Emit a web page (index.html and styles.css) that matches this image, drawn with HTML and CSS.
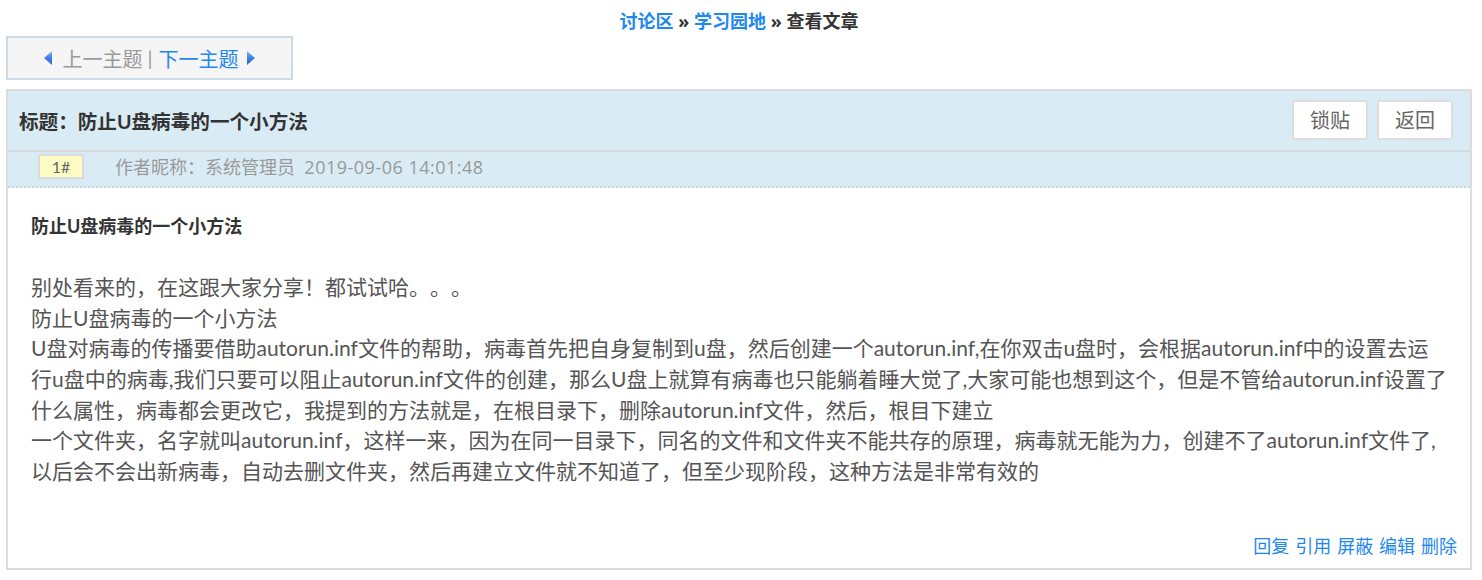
FILE: index.html
```html
<!DOCTYPE html>
<html lang="zh-CN">
<head>
<meta charset="utf-8">
<title>查看文章</title>
<link rel="stylesheet" href="styles.css">
</head>
<body>
<div class="crumbs"><a href="#">讨论区</a> » <a href="#">学习园地</a> » <span>查看文章</span></div>
<div class="topic-nav">
  <svg class="arr" width="8" height="14" viewBox="0 0 8 14"><defs><linearGradient id="ga" x1="0" y1="0" x2="0" y2="1"><stop offset="0" stop-color="#8fb5f2"/><stop offset="0.5" stop-color="#3f7fe6"/><stop offset="1" stop-color="#2c62c9"/></linearGradient></defs><polygon points="0,7 8,0 8,14" fill="url(#ga)"/></svg>
  <span class="prev">上一主题</span>
  <span class="sep">|</span>
  <a href="#" class="next">下一主题</a>
  <svg class="arr arr-r" width="8" height="14" viewBox="0 0 8 14"><defs><linearGradient id="gb" x1="0" y1="0" x2="0" y2="1"><stop offset="0" stop-color="#8fb5f2"/><stop offset="0.5" stop-color="#3f7fe6"/><stop offset="1" stop-color="#2c62c9"/></linearGradient></defs><polygon points="8,7 0,0 0,14" fill="url(#gb)"/></svg>
</div>
<div class="panel">
  <div class="panel-head">
    <div class="title">标题：防止U盘病毒的一个小方法</div>
    <div class="btns"><button class="btn">锁贴</button><button class="btn">返回</button></div>
  </div>
  <div class="author-row">
    <span class="floor">1#</span>
    <span class="author">作者昵称：系统管理员&nbsp;&nbsp;<span class="date">2019-09-06 14:01:48</span></span>
  </div>
  <div class="content">
    <div class="heading">防止U盘病毒的一个小方法</div>
    <br>
    别处看来的，在这跟大家分享！都试试哈。。。<br>
    防止U盘病毒的一个小方法<br>
    U盘对病毒的传播要借助autorun.inf文件的帮助，病毒首先把自身复制到u盘，然后创建一个autorun.inf,在你双击u盘时，会根据autorun.inf中的设置去运行u盘中的病毒,我们只要可以阻止autorun.inf文件的创建，那么U盘上就算有病毒也只能躺着睡大觉了,大家可能也想到这个，但是不管给autorun.inf设置了什么属性，病毒都会更改它，我提到的方法就是，在根目录下，删除autorun.inf文件，然后，根目下建立<br>
    一个文件夹，名字就叫autorun.inf，这样一来，因为在同一目录下，同名的文件和文件夹不能共存的原理，病毒就无能为力，创建不了autorun.inf文件了,以后会不会出新病毒，自动去删文件夹，然后再建立文件就不知道了，但至少现阶段，这种方法是非常有效的
  </div>
  <div class="actions"><a href="#">回复</a> <a href="#">引用</a> <a href="#">屏蔽</a> <a href="#">编辑</a> <a href="#">删除</a></div>
</div>
</body>
</html>
```
FILE: styles.css
```css
html, body {
  margin: 0;
  padding: 0;
  background: #fff;
}
body {
  font-family: "Lato", "Noto Sans CJK SC", sans-serif;
  color: #555;
  padding: 0 10px 0 6px;
  text-spacing-trim: space-all;
}
a {
  color: #1e88f0;
  text-decoration: none;
}
.crumbs {
  font-family: "Open Sans", "Noto Sans CJK SC", sans-serif;
  text-align: center;
  font-size: 18px;
  font-weight: bold;
  line-height: 24px;
  padding-top: 9px;
  height: 27px;
  color: #333;
}
.crumbs a { color: #1e88f0; }
.topic-nav {
  width: 283px;
  height: 40px;
  border: 2px solid #cddbe8;
  background: #f5f5f5;
  display: flex;
  align-items: center;
  justify-content: center;
  font-size: 20px;
  color: #999;
}
.topic-nav .arr { margin-right: 10px; }
.topic-nav .arr-r { margin-right: 0; margin-left: 8px; }
.topic-nav .sep { margin: 0 6px 0 5px; }
.panel {
  margin-top: 9px;
  border: 2px solid #dcdcdc;
  display: flex;
  flex-direction: column;
}
.panel-head {
  height: 59px;
  background: #d9ecf5;
  border-bottom: 2px solid #d8d8d8;
  display: flex;
  align-items: center;
  justify-content: space-between;
  padding: 0 17px 0 11px;
}
.title {
  font-size: 19.6px;
  font-weight: bold;
  color: #333;
}
.btns {
  display: flex;
  gap: 9px;
  margin-top: -2px;
}
.btn {
  box-sizing: border-box;
  width: 76px;
  height: 40px;
  background: #fff;
  border: 2px solid #ddd;
  border-radius: 3px;
  font-family: inherit;
  font-size: 20px;
  color: #666;
  padding: 0;
}
.author-row {
  height: 34px;
  background: #d9ecf5;
  border-bottom: 2px dotted #d4d4d4;
  display: flex;
  align-items: flex-start;
  padding-left: 30px;
}
.floor {
  margin-top: 2px;
  width: 42px;
  height: 21px;
  border: 2px solid #dcdcdc;
  background: #fcfcc4;
  font-size: 16px;
  line-height: 21px;
  text-align: center;
  color: #666;
}
.author {
  font-family: "Open Sans", "Noto Sans CJK SC", sans-serif;
  margin-left: 31px;
  font-size: 18px;
  line-height: 30px;
  color: #999;
}
.date { letter-spacing: 0.5px; }
.content {
  padding: 23px 23px 46px 23px;
  font-size: 21px;
  line-height: 30.6px;
  color: #555;
}
.heading {
  font-size: 18px;
  font-weight: bold;
  color: #333;
}
.actions {
  text-align: right;
  padding: 0 13px 8px 0;
  font-size: 18px;
  line-height: 28px;
  word-spacing: 1.3px;
}
```
